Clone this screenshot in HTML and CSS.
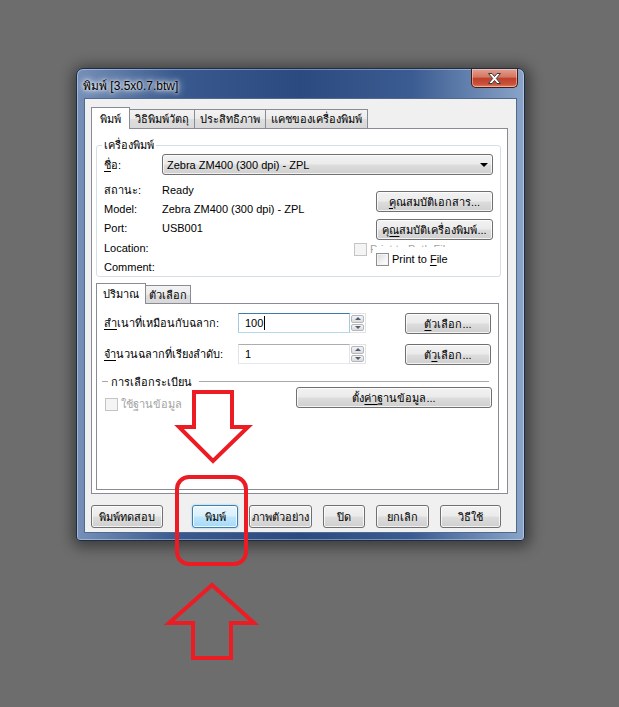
FILE: index.html
```html
<!DOCTYPE html>
<html lang="th">
  <head>
    <meta charset="UTF-8" />
    <meta name="viewport" content="width=device-width, initial-scale=1.0" />
    <title>พิมพ์ [3.5x0.7.btw]</title>
    <link rel="stylesheet" href="styles.css">
  </head>
  <body>
    <div class="window">
      <div class="titlebar">
        <span class="title">พิมพ์ [3.5x0.7.btw]</span>
        <button class="close-btn" aria-label="ปิด">
          <svg width="13" height="11" viewBox="0 0 13 11">
            <path d="M0.5 0.5h3.5l2.5 3 2.5-3h3.5l-4.2 5 4.2 5h-3.5l-2.5-3-2.5 3h-3.5l4.2-5z" fill="#fff" stroke="#3a3a3a" stroke-width="1" stroke-linejoin="round" />
          </svg>
        </button>
      </div>

      <div class="client">
        <div class="tabs main-tabs">
          <div class="tab active t1">พิมพ์</div>
          <div class="tab t2">วิธิพิมพ์วัตถุ</div>
          <div class="tab t3">ประสิทธิภาพ</div>
          <div class="tab t4">แคชของเครื่องพิมพ์</div>
        </div>

        <div class="panel main-panel">
          <!-- เครื่องพิมพ์ -->
          <div class="group printer">
            <span class="group-title">เครื่องพิมพ์</span>
            <div class="name-row">
              <span class="label"><u>ชื่</u>อ:</span>
              <div class="combo">
                <span>Zebra ZM400 (300 dpi) - ZPL</span>
                <span class="combo-arrow"></span>
              </div>
            </div>
            <div class="info">
              <div class="info-list">
                <div class="info-row"><span class="label">สถานะ:</span><span>Ready</span></div>
                <div class="info-row"><span class="label">Model:</span><span>Zebra ZM400 (300 dpi) - ZPL</span></div>
                <div class="info-row"><span class="label">Port:</span><span>USB001</span></div>
                <div class="info-row"><span class="label">Location:</span><span></span></div>
                <div class="info-row"><span class="label">Comment:</span><span></span></div>
              </div>
              <div class="info-side">
                <button class="btn side-btn"><u>คุ</u>ณสมบัติเอกสาร...</button>
                <button class="btn side-btn">ค<u>ุณ</u>สมบัติเครื่องพิมพ์...</button>
                <div class="check-stack">
                  <label class="check disabled"><span class="box"></span><span>Print to Path File</span></label>
                  <label class="check print-file"><span class="box"></span><span>Print to <u>F</u>ile</span></label>
                </div>
              </div>
            </div>
          </div>

          <!-- ปริมาณ -->
          <div class="tabs sub-tabs">
            <div class="tab active s1">ปริมาณ</div>
            <div class="tab s2">ตัวเลือก</div>
          </div>
          <div class="panel sub-panel">
            <div class="field-row">
              <span class="field-label"><u>สำ</u>เนาที่เหมือนกับฉลาก:</span>
              <div class="spin focused">
                <span class="spin-value">100<span class="caret"></span></span>
                <span class="spin-btns"><span class="spin-up"></span><span class="spin-down"></span></span>
              </div>
              <button class="btn opt-btn"><u>ตั</u>วเลือก...</button>
            </div>
            <div class="field-row">
              <span class="field-label"><u>จำ</u>นวนฉลากที่เรียงลำดับ:</span>
              <div class="spin">
                <span class="spin-value">1</span>
                <span class="spin-btns"><span class="spin-up"></span><span class="spin-down"></span></span>
              </div>
              <button class="btn opt-btn">ตั<u>ว</u>เลือก...</button>
            </div>
            <div class="separator">
              <span class="sep-dash"></span>
              <span class="sep-label">การเลือกระเบียน</span>
              <span class="sep-line"></span>
            </div>
            <div class="db-row">
              <label class="check disabled"><span class="box"></span><span>ใช้<u>ฐ</u>านข้อมูล</span></label>
              <button class="btn db-btn">ตั้ง<u>ค่า</u>ฐานข้อมูล...</button>
            </div>
          </div>
        </div>

        <div class="actions">
          <button class="btn act-btn test-btn">พิมพ์ทดสอบ</button>
          <button class="btn act-btn default print-btn">พิมพ์</button>
          <button class="btn act-btn preview-btn">ภาพตัวอย่าง</button>
          <button class="btn act-btn close-act">ปิด</button>
          <button class="btn act-btn cancel-btn">ยกเลิก</button>
          <button class="btn act-btn help-btn">วิธีใช้</button>
        </div>
      </div>
    </div>

    <!-- red marks drawn over the screenshot -->
    <svg class="marks" width="619" height="707" viewBox="0 0 619 707">
      <g fill="none" stroke="#ec1c24" stroke-width="4" stroke-linejoin="miter">
        <path d="M194 392 H232 V427 H248 L213 461 L179 427 H194 Z" />
        <rect x="177" y="477" width="69" height="87" rx="12" />
        <path d="M212 585 L254 623 H231 V658 H193 V623 H169 Z" />
      </g>
    </svg>
  </body>
</html>
```

FILE: styles.css
```css
body {
  margin: 0;
  height: 707px;
  overflow: hidden;
  background-color: #6d6d6d;
  font-family: Tahoma, "Liberation Sans", "DejaVu Sans", sans-serif;
  font-size: 11px;
  color: #000;
  position: relative;
}

button {
  font: inherit;
  color: inherit;
}

u {
  text-underline-offset: 2px;
}

/* Window frame */
.window {
  box-sizing: border-box;
  width: 449px;
  height: 473px;
  margin: 68px 0 0 76px;
  border: 1px solid #1c2d4a;
  border-radius: 7px 7px 4px 4px;
  background: linear-gradient(90deg, #7690b8 0%, #3a5a8f 22%, #2b4a80 50%, #3b5c92 75%, #8aa4c8 100%);
  box-shadow: 1px 2px 14px 4px rgba(0, 0, 0, 0.45), inset 0 0 0 1px rgba(255, 255, 255, 0.35);
  display: flex;
  flex-direction: column;
}

.titlebar {
  height: 29px;
  display: flex;
  align-items: flex-start;
  justify-content: space-between;
  padding: 0 6px 0 6px;
}

.title {
  margin-top: 7px;
  font-size: 12px;
  color: #000;
  text-shadow: 0 0 6px #fff, 0 0 3px #fff, 0 0 10px rgba(255, 255, 255, 0.9);
}

.close-btn {
  width: 47px;
  height: 19px;
  margin-top: 0;
  border: 1px solid #4a1a12;
  border-top: none;
  border-radius: 0 0 5px 5px;
  background: linear-gradient(#e2a190 0%, #d47560 45%, #c0402a 52%, #c8523b 85%, #e08a6f 100%);
  box-shadow: inset 0 0 0 1px rgba(255, 220, 210, 0.5);
  display: flex;
  align-items: center;
  justify-content: center;
  padding: 0;
}

.client {
  box-sizing: border-box;
  height: 435px;
  margin: 0 7px 7px 7px;
  background-color: #f0f0f0;
  border: 1px solid #51698f;
  padding: 8px 8px 0 6px;
}

/* Tabs */
.tabs {
  display: flex;
  align-items: flex-end;
  position: relative;
  z-index: 1;
}

.main-tabs {
  height: 21px;
}

.tab {
  box-sizing: border-box;
  height: 19px;
  border: 1px solid #898c95;
  border-bottom: none;
  margin-left: -1px;
  background: linear-gradient(#f3f3f3 0%, #ebebeb 50%, #dedede 51%, #d8d8d8 100%);
  display: flex;
  align-items: center;
  justify-content: center;
  white-space: nowrap;
}

.tab:first-child {
  margin-left: 0;
}

.tab.active {
  height: 22px;
  margin-bottom: -1px;
  background: #fff;
  position: relative;
  z-index: 2;
}

.t1 { width: 39px; }
.t2 { width: 66px; }
.t3 { width: 72px; }
.t4 { width: 103px; }

.panel {
  box-sizing: border-box;
  background: #fff;
  border: 1px solid #898c95;
}

.main-panel {
  width: 417px;
  height: 366px;
  padding: 16px 6px 0 4px;
}

/* Group box */
.group {
  box-sizing: border-box;
  height: 132px;
  border: 1px solid #d5dfe5;
  border-radius: 3px;
  position: relative;
  padding: 8px 7px 0 7px;
}

.group-title {
  position: absolute;
  top: -8px;
  left: 5px;
  padding: 0 2px;
  background: #fff;
  line-height: 14px;
}

.name-row {
  display: flex;
  align-items: center;
}

.label {
  width: 58px;
  flex-shrink: 0;
}

.combo {
  box-sizing: border-box;
  flex: 1;
  height: 21px;
  border: 1px solid #707070;
  border-radius: 3px;
  background: linear-gradient(#f2f2f2 0%, #ebebeb 48%, #dddddd 52%, #cfcfcf 100%);
  box-shadow: inset 0 0 0 1px rgba(255, 255, 255, 0.7);
  display: flex;
  align-items: center;
  justify-content: space-between;
  padding: 0 3px 0 4px;
}

.combo-arrow {
  width: 0;
  height: 0;
  border-left: 4px solid transparent;
  border-right: 4px solid transparent;
  border-top: 4px solid #000;
  margin-right: 1px;
}

.info {
  display: flex;
  margin-top: 5px;
}

.info-list {
  flex: 1;
}

.info-row {
  display: flex;
  height: 19.4px;
  align-items: center;
}

.info-side {
  width: 117px;
  padding-top: 11px;
  display: flex;
  flex-direction: column;
}

/* Buttons */
.btn {
  box-sizing: border-box;
  height: 21px;
  border: 1px solid #707070;
  border-radius: 3px;
  background: linear-gradient(#f2f2f2 0%, #ebebeb 48%, #dddddd 52%, #cfcfcf 100%);
  box-shadow: inset 0 0 0 1px rgba(255, 255, 255, 0.75);
  padding: 0;
  text-align: center;
  white-space: nowrap;
}

.btn.default {
  border-color: #3c7fb1;
  background: linear-gradient(#eaf6fd 0%, #d9f0fc 48%, #bee6fd 52%, #a7d9f5 100%);
  box-shadow: inset 0 0 0 1px rgba(255, 255, 255, 0.8), 0 0 2px #6fc5f0;
}

.side-btn + .side-btn {
  margin-top: 7px;
}

/* Checkboxes */
.check {
  display: flex;
  align-items: center;
  gap: 3px;
  line-height: 13px;
  white-space: nowrap;
}

.box {
  box-sizing: border-box;
  width: 13px;
  height: 13px;
  flex-shrink: 0;
  border: 1px solid #8e8f8f;
  background: linear-gradient(135deg, #d8d8d8 0%, #f4f4f4 60%, #ffffff 100%);
  box-shadow: inset 0 0 0 1px #f4f4f4;
}

.check.disabled {
  color: #a3a3a3;
}

.check.disabled .box {
  border-color: #c4c4c4;
  background: #f4f4f4;
  box-shadow: none;
}

.check-stack {
  position: relative;
  margin: 3px 0 0 -22px;
}

.print-file {
  position: absolute;
  left: 19px;
  top: 4px;
  padding: 6px 12px 1px 3px;
  background: #fff;
}

/* Sub tabs */
.sub-tabs {
  height: 20px;
  margin-top: 6px;
}

.sub-tabs .tab {
  height: 18px;
}

.sub-tabs .tab.active {
  height: 21px;
}

.s1 { width: 50px; }
.s2 { width: 46px; }

.sub-panel {
  width: 403px;
  height: 187px;
  padding: 9px 7px 0 7px;
}

.field-row {
  display: flex;
  align-items: flex-start;
}

.field-row + .field-row {
  margin-top: 10px;
}

.field-label {
  width: 134px;
  flex-shrink: 0;
  line-height: 20px;
}

.spin {
  display: flex;
  height: 20px;
}

.spin-value {
  box-sizing: border-box;
  width: 112px;
  height: 20px;
  border: 1px solid #abadb3;
  border-color: #abadb3 #e2e3ea #e3e9ef #e2e3ea;
  background: #fff;
  padding-left: 6px;
  display: flex;
  align-items: center;
}

.spin.focused .spin-value {
  border-color: #3d7bad #a4c9e3 #b7d9ed #a4c9e3;
}

.caret {
  width: 1px;
  height: 14px;
  background: #000;
  margin-left: 1px;
}

.spin-btns {
  box-sizing: border-box;
  width: 16px;
  height: 20px;
  display: flex;
  flex-direction: column;
  border: 1px solid #e2e3ea;
  border-left: none;
  background: #fff;
  padding: 1px;
  gap: 1px;
}

.spin-up,
.spin-down {
  flex: 1;
  border: 1px solid #b6b6b6;
  border-radius: 2px;
  background: linear-gradient(#f4f4f4, #dcdcdc);
  display: flex;
  align-items: center;
  justify-content: center;
}

.spin-up::after,
.spin-down::after {
  content: "";
  border-left: 3px solid transparent;
  border-right: 3px solid transparent;
}

.spin-up::after {
  border-bottom: 3px solid #4a5f7e;
}

.spin-down::after {
  border-top: 3px solid #4a5f7e;
}

.opt-btn {
  width: 86px;
  margin-left: auto;
}

.separator {
  display: flex;
  align-items: center;
  height: 13px;
  margin: 10px 2px 0 -2px;
}

.sep-dash {
  width: 6px;
  height: 1px;
  background: #a8a8a8;
}

.sep-label {
  padding: 0 7px 0 3px;
}

.sep-line {
  flex: 1;
  height: 1px;
  background: #a8a8a8;
}

.db-row {
  display: flex;
  align-items: flex-start;
  justify-content: space-between;
  margin-top: -1px;
}

.db-row .check {
  margin: 11px 0 0 1px;
}

.db-btn {
  width: 196px;
  margin-right: -1px;
}

/* Bottom buttons */
.actions {
  display: flex;
  margin-top: 11px;
  padding-left: 0;
  gap: 11px;
}

.act-btn {
  height: 23px;
}

.test-btn { width: 72px; margin-right: 18px; }
.print-btn { width: 46px; }
.preview-btn { width: 63px; }
.close-act { width: 42px; }
.cancel-btn { width: 53px; }
.help-btn { width: 61px; }

.marks {
  position: absolute;
  top: 0;
  left: 0;
  pointer-events: none;
}
```
